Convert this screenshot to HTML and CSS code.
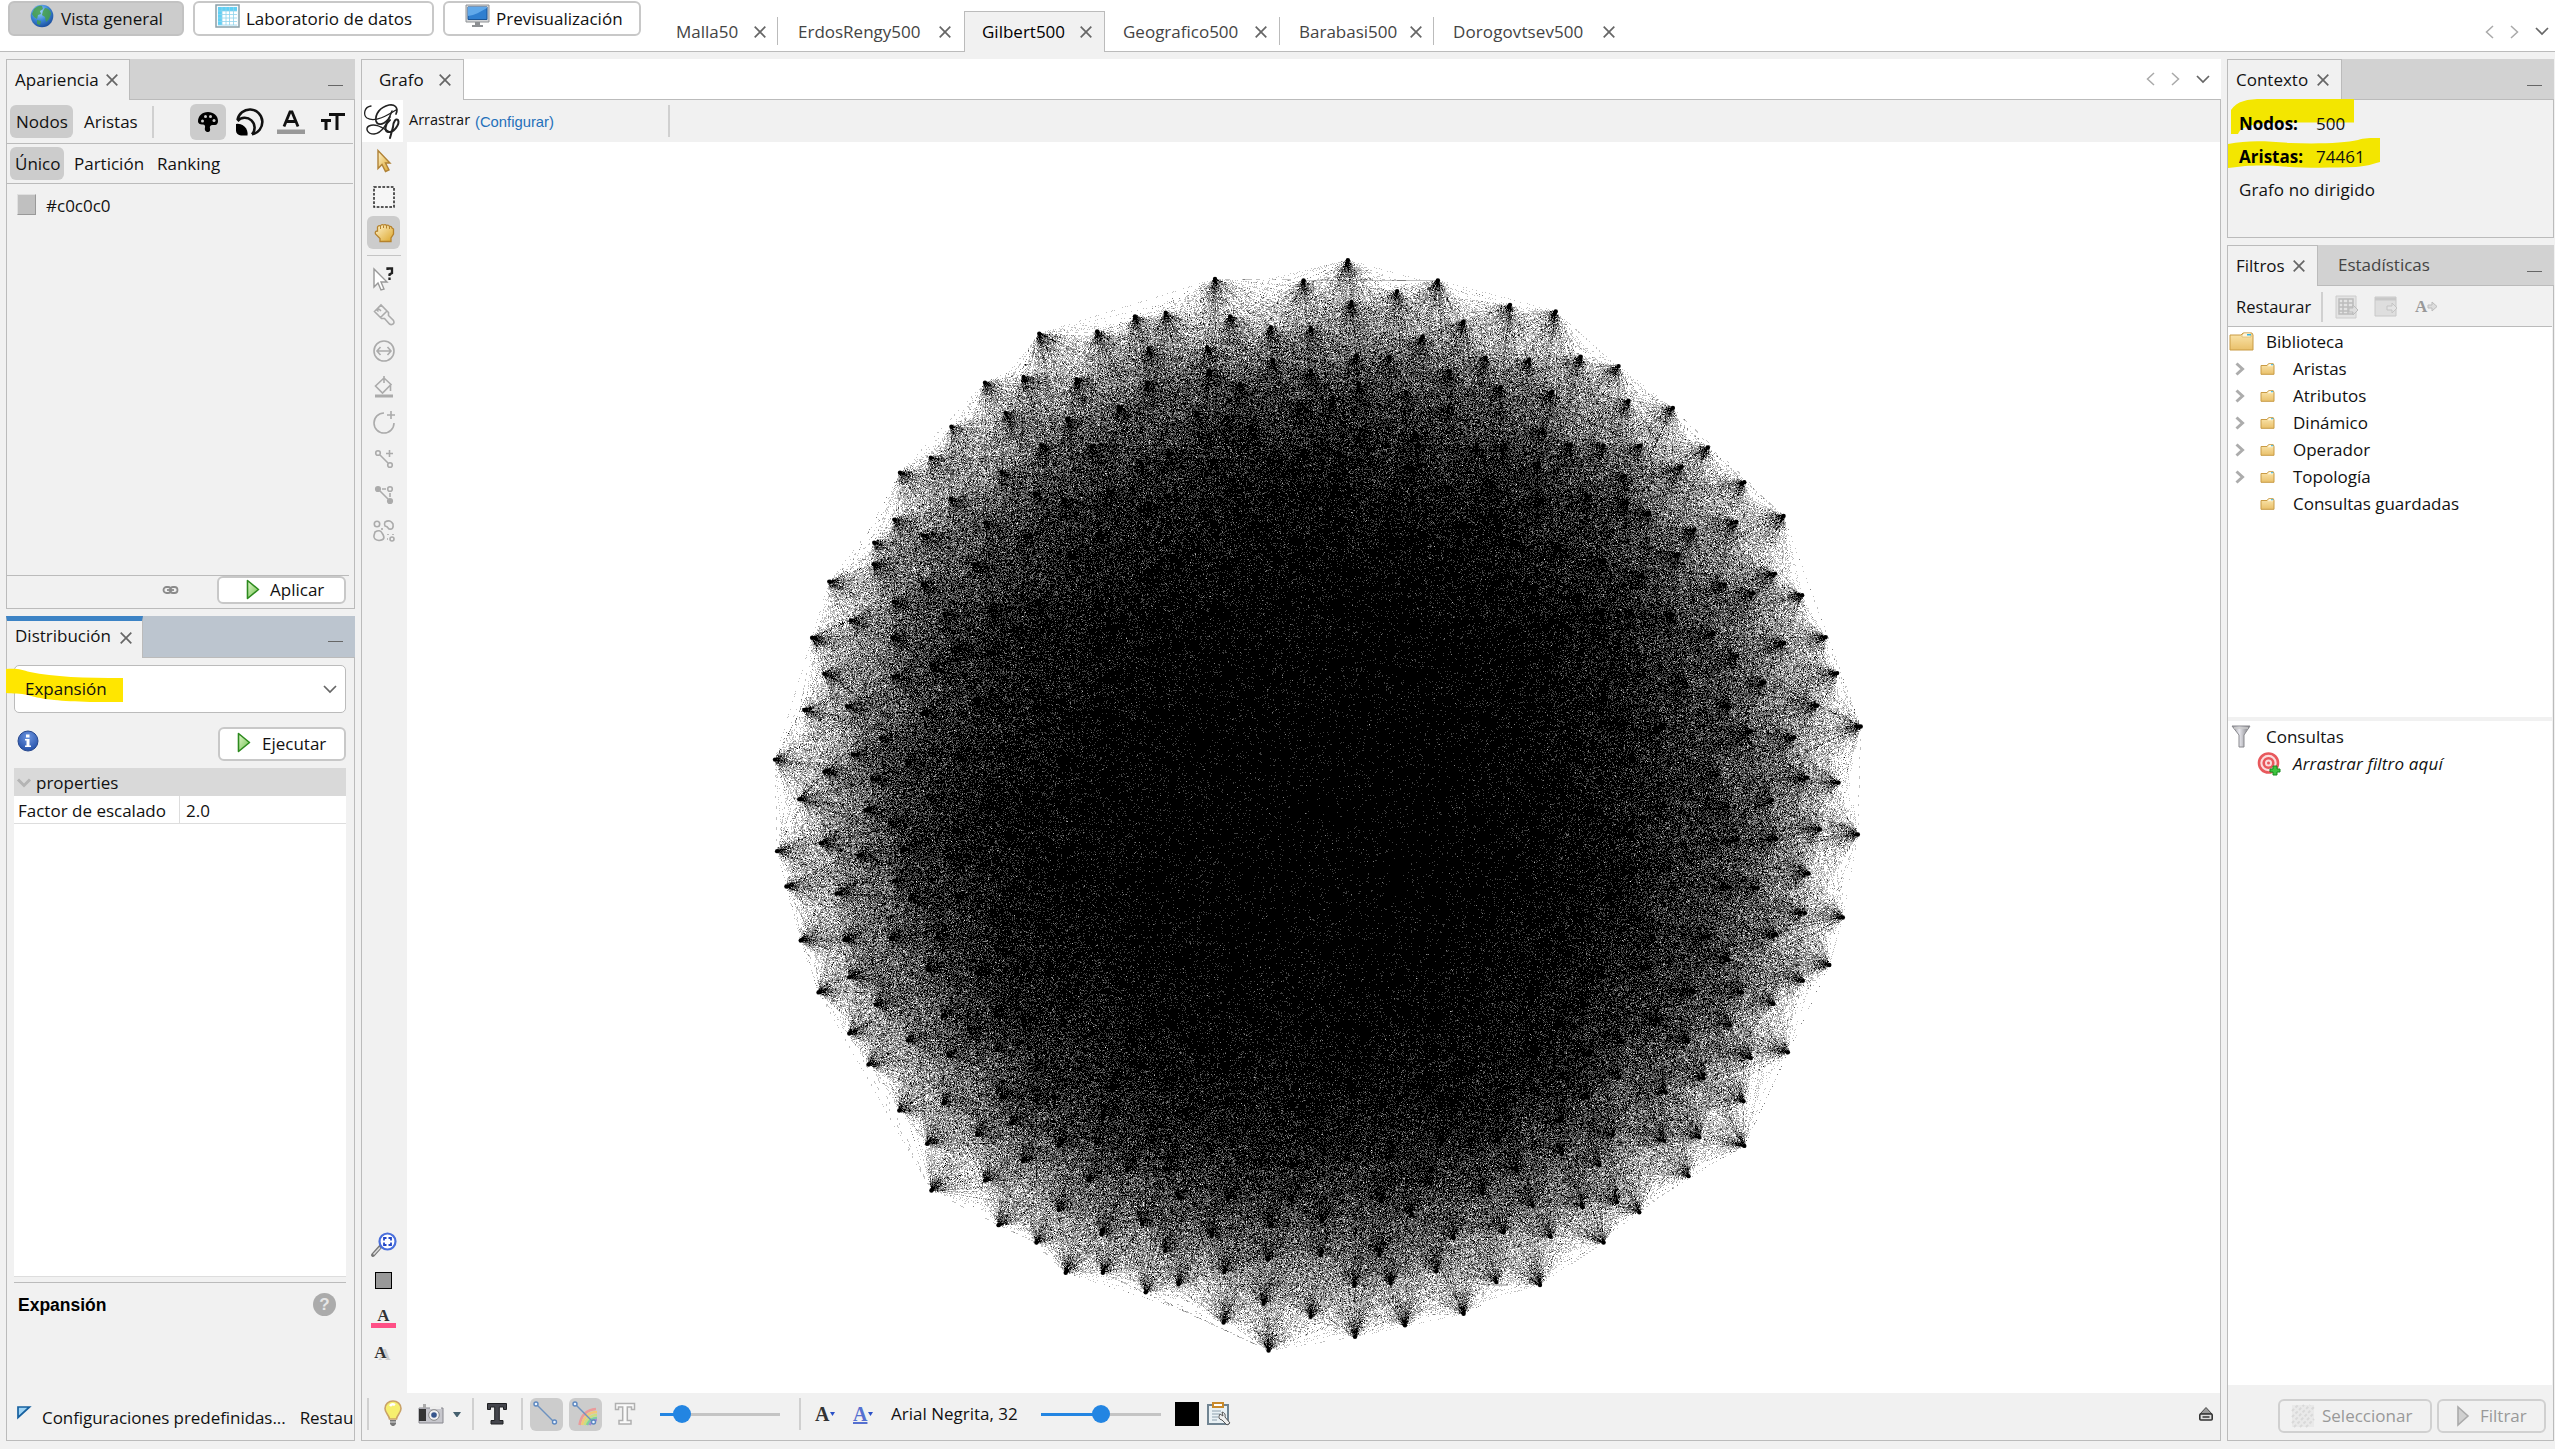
FILE: index.html
```html
<!DOCTYPE html>
<html lang="es">
<head>
<meta charset="utf-8">
<title>Gilbert500</title>
<link rel="stylesheet" href="styles.css">
</head>
<body>
<svg class="defs" width="0" height="0">
  <defs>
    <linearGradient id="gold" x1="0" y1="0" x2="1" y2="1"><stop offset="0" stop-color="#fff3cd"/><stop offset="1" stop-color="#dca62a"/></linearGradient>
    <linearGradient id="green" x1="0" y1="0" x2="1" y2="1"><stop offset="0" stop-color="#e4f8cf"/><stop offset="1" stop-color="#6cc04a"/></linearGradient>
    <linearGradient id="folder" x1="0" y1="0" x2="0" y2="1"><stop offset="0" stop-color="#fbe6ae"/><stop offset="1" stop-color="#e9c06a"/></linearGradient>
    <linearGradient id="steel" x1="0" y1="0" x2="1" y2="0"><stop offset="0" stop-color="#8b8b90"/><stop offset=".4" stop-color="#e8e8ee"/><stop offset="1" stop-color="#77777c"/></linearGradient>
    <radialGradient id="globe" cx=".4" cy=".3" r=".8"><stop offset="0" stop-color="#a5d8ff"/><stop offset=".5" stop-color="#3c86d6"/><stop offset="1" stop-color="#12408f"/></radialGradient>
    <radialGradient id="info" cx=".5" cy=".3" r=".7"><stop offset="0" stop-color="#6d95e0"/><stop offset="1" stop-color="#2450a8"/></radialGradient>
    <symbol id="x" viewBox="0 0 12 12"><path d="M.7.7l10.6 10.6M11.3.7L.7 11.3" stroke="#666" stroke-width="1.7" fill="none"/></symbol>
    <symbol id="left" viewBox="0 0 9 14"><path d="M8 1L1.5 7 8 13" stroke="#a9a9a9" stroke-width="1.5" fill="none"/></symbol>
    <symbol id="right" viewBox="0 0 9 14"><path d="M1 1l6.500 6L1 13" stroke="#a9a9a9" stroke-width="1.5" fill="none"/></symbol>
    <symbol id="down" viewBox="0 0 14 9"><path d="M1 1l6 6 6-6" stroke="#666" stroke-width="1.7" fill="none"/></symbol>
    <symbol id="tree" viewBox="0 0 10 14"><path d="M1.500 1.500L7.500 7l-6 5.500" stroke="#acacac" stroke-width="3" fill="none"/></symbol>
    <symbol id="play" viewBox="0 0 14 22"><path d="M1.500 1.500v18L12.500 10.500z" fill="url(#green)" stroke="#2d8a1e" stroke-width="1.6" stroke-linejoin="round"/></symbol>
    <symbol id="fold" viewBox="0 0 25 20"><path d="M1 3h11l2-2h9l1 2v15H1z" fill="url(#folder)" stroke="#c99b45"/><path d="M13 3l2-2h7v4h-9z" fill="#fff6dc" stroke="#d9b468" stroke-width=".7"/><path d="M18 2h4v1.500h-4z" fill="#31b3e0"/></symbol>
    <symbol id="sfold" viewBox="0 0 15 12"><path d="M1 2.500h6L8.500.7h4.800l.7 1.800v8.800H1z" fill="url(#folder)" stroke="#c99b45"/><path d="M8 2.700L9.300 1H13v2.200H8z" fill="#fff6dc"/><path d="M11 1.200h2.200v1H11z" fill="#31b3e0"/></symbol>
  </defs>
</svg>
<div class="app">
  <header class="top">
    <button class="mode on m1"><svg width="24" height="24" viewBox="0 0 24 24"><circle cx="12" cy="12" r="11.300" fill="url(#globe)"/><path d="M4 5c3-3 6-4 8-3l1 3-3 2 1 3-3 1-1 4-3-2-2-3zM15 4c3 0 6 3 6 6l-2 5-3 3-1-5-3-2 1-4zM7 16l4 1-1 4-3-1z" fill="#46a049" opacity=".85"/></svg><span>Vista general</span></button>
    <button class="mode m2"><svg width="25" height="24" viewBox="0 0 25 24"><path d="M1 1h23v22H1z" fill="#f4fbff" stroke="#8ba0a8" stroke-width="1.500"/><path d="M3 3h19v4H3zM3 7h4v14H3z" fill="#5fd0f5"/><path d="M7 7h15v14H7z" fill="#fff"/><path d="M3 7h19M3 10.500h19M3 14h19M3 17.500h19M3 21h19M7 3v18M11 3v18M14.500 3v18M18.500 3v18" stroke="#8fd3ec" stroke-width=".8"/></svg><span>Laboratorio de datos</span></button>
    <button class="mode m3"><svg width="25" height="24" viewBox="0 0 25 24"><path d="M1 1h23v17H1z" fill="#d4d6d8" stroke="#909396"/><path d="M3 3h19v12.500H3z" fill="#2f7fd0" stroke="#1b5596"/><path d="M3 12C10 11 15 8 22 4v-1H3z" fill="#61a9ea"/><path d="M10 18h5v3h3v2H7v-2h3z" fill="#8d9093"/></svg><span>Previsualización</span></button>
    <nav class="docs">
      <div class="doc d1"><span>Malla50</span><svg class="x"><use href="#x"/></svg></div>
      <div class="doc d2"><span>ErdosRengy500</span><svg class="x"><use href="#x"/></svg></div>
      <div class="doc d3 cur"><span>Gilbert500</span><svg class="x"><use href="#x"/></svg></div>
      <div class="doc d4"><span>Geografico500</span><svg class="x"><use href="#x"/></svg></div>
      <div class="doc d5"><span>Barabasi500</span><svg class="x"><use href="#x"/></svg></div>
      <div class="doc d6"><span>Dorogovtsev500</span><svg class="x"><use href="#x"/></svg></div>
    </nav>
    <div class="arrows"><svg width="9" height="14"><use href="#left"/></svg><svg width="9" height="14"><use href="#right"/></svg><svg width="14" height="9"><use href="#down"/></svg></div>
  </header>
  <main class="work">
    <div class="col">
      <section class="panel appearance">
        <div class="head"><div class="tab"><span>Apariencia</span><svg class="x"><use href="#x"/></svg></div><i class="min"></i></div>
        <div class="row elements">
          <span class="pill on">Nodos</span><span class="pill ar">Aristas</span><i class="sep"></i>
          <span class="tool"><svg width="22" height="22" viewBox="0 0 22 22"><path d="M11 1C5 1 1 5 1 10.500c0 2 2 3 4 3 2.500-.5 3.500 1 3 3-.5 2 0 4.500 3 4.500 2 0 2.500-2 2-3.500-.6-2 .6-3.500 2.500-3.500H18c2 0 3-2 3-4C21 4.500 16.500 1 11 1z"/><g fill="#ccc"><circle cx="5.500" cy="10" r="1.500"/><circle cx="8.500" cy="5.500" r="1.500"/><circle cx="13.500" cy="5.500" r="1.500"/><circle cx="17" cy="9.500" r="1.500"/></g></svg></span>
          <svg class="rings" width="28" height="28" viewBox="0 0 28 28"><g fill="none" stroke="#111" stroke-width="2.600"><path d="M1.500 12A12.500 12.500 0 1 1 16 26.300"/><path d="M1.500 13A8.500 8.500 0 1 1 16 26.300"/></g><path d="M0 16a10 10 0 0 1 11.500 11.500H5a5 5 0 0 1-5-5z"/></svg>
          <svg class="lab" width="28" height="24" viewBox="0 0 28 24"><path d="M7 15.500L13 1h2l6 14.500M9.500 10.500h9" fill="none" stroke="#111" stroke-width="2.800"/><path d="M0 18.500h28v4.500H0z" fill="#999"/></svg>
          <svg class="size" width="25" height="20" viewBox="0 0 25 20"><path d="M9 2.500h16M17 2v16M1 8.500h10M6 8v10" fill="none" stroke="#111" stroke-width="3"/></svg>
        </div>
        <div class="row modes"><span class="pill on">Único</span><span class="pill p2">Partición</span><span class="pill p3">Ranking</span></div>
        <div class="color"><i></i><span>#c0c0c0</span></div>
        <div class="apply"><svg width="17" height="11" viewBox="0 0 17 11"><g fill="none" stroke="#8b8b8b" stroke-width="1.800"><rect x="1.500" y="2" width="7.500" height="6" rx="3"/><rect x="8" y="2" width="7.500" height="6" rx="3"/><path d="M5 5h7"/></g></svg><button><svg width="14" height="22"><use href="#play"/></svg><span>Aplicar</span></button></div>
      </section>
      <section class="panel layout">
        <div class="head blue"><div class="tab"><span>Distribución</span><svg class="x"><use href="#x"/></svg></div><i class="min"></i></div>
        <div class="combo"><svg class="mark" width="118" height="34" viewBox="0 0 118 34"><path d="M0 1C12 0 16 2 24 4c24 5 54 6 93 6v24H84C55 33 38 32 22 27 14 25 7 26 0 25z" fill="#ffe600"/></svg><span>Expansión</span><svg width="14" height="9"><use href="#down"/></svg></div>
        <div class="run"><svg width="22" height="22" viewBox="0 0 22 22"><circle cx="11" cy="11" r="10" fill="url(#info)" stroke="#27488e"/><path d="M9 4.500h3.500v3H9zM8 9h4.500v6.500H14V17H8v-1.500h1.500v-5H8z" fill="#fff"/></svg><button><svg width="14" height="22"><use href="#play"/></svg><span>Ejecutar</span></button></div>
        <div class="props">
          <div class="group"><svg width="14" height="10" viewBox="0 0 14 10"><path d="M1 1.500l6 6 6-6" fill="none" stroke="#b4b4b4" stroke-width="3"/></svg><span>properties</span></div>
          <div class="prop"><span>Factor de escalado</span><span>2.0</span></div>
        </div>
        <div class="desc"><b>Expansión</b><span class="help">?</span></div>
        <div class="presets"><svg width="14" height="13" viewBox="0 0 14 13"><path d="M1 1h11.500L1 11.500z" fill="#9fd4f5" stroke="#16609f" stroke-width="1.700"/></svg><span>Configuraciones predefinidas...</span><span class="reset">Restau</span></div>
      </section>
    </div>
    <section class="panel graph">
      <div class="head"><div class="tab"><span>Grafo</span><svg class="x"><use href="#x"/></svg></div><div class="arrows"><svg width="9" height="14"><use href="#left"/></svg><svg width="9" height="14"><use href="#right"/></svg><svg width="14" height="9"><use href="#down"/></svg></div></div>
      <div class="gbar">
        <div class="logo"><svg width="39" height="38" viewBox="0 0 39 38"><g fill="none" stroke="#222" stroke-linecap="round"><path d="M8 3C1 4 0 12 4 15c8 5 21-3 29-8" stroke-width="1.300"/><path d="M33 11C36 4 31 1 26 2 17 4 12 11 13 18c2 6 9 3 14-4" stroke-width="1.700"/><path d="M29 8C24 20 20 30 11 31c-7 0-9-6-5-8 6-3 12 1 19 5" stroke-width="1.500"/><path d="M27 17c-5 4-6 11-2 12 6 1 12-8 10-12-2-2-5 2-5 7l-3 11" stroke-width="2"/></g></svg></div>
        <span class="drag">Arrastrar</span><a>(Configurar)</a><i class="sep"></i>
      </div>
      <div class="stage">
        <aside class="tools">
          <div class="ti"><svg width="24" height="24" viewBox="0 0 24 24"><path d="M6 1.500v18l4-4 3.500 7 3.500-1.500-3.500-7H18z" fill="url(#gold)" stroke="#b08236" stroke-width="1.400"/></svg></div>
          <div class="ti"><svg width="24" height="24" viewBox="0 0 24 24"><rect x="2" y="2" width="20" height="20" fill="#f6f6f6" stroke="#222" stroke-width="1.500" stroke-dasharray="2.700 1.500"/></svg></div>
          <div class="ti on"><svg width="24" height="24" viewBox="0 0 24 24"><path d="M8 20.500v-3L3.500 13q-1-3 2-3V6q1-2 3-1 1-2 3-1 2-1 3 .5 2-1 3 1 2-.5 2.500 1.500l1.500 1v5L19 17v3.500z" fill="url(#gold)" stroke="#b5822c" stroke-width="1.300"/><path d="M8.500 5v3M11.500 4.500V7M14.500 4.500v3M17.500 6v2" stroke="#b5822c"/></svg></div>
          <i class="rule"></i>
          <div class="ti"><svg width="24" height="24" viewBox="0 0 24 24"><path d="M2 2v18l4-4 3 7 3-1-3-7h6z" fill="#fff" stroke="#999" stroke-width="1.400"/><path d="M15.500 3V1.500h4.500V6l-2.500 1.500V9M17.500 10.500V13" fill="none" stroke="#222" stroke-width="2.300"/></svg></div>
          <div class="ti g"><svg width="24" height="24" viewBox="0 0 24 24"><path d="M2.500 8.500L9 2l7.500 7.500v3l5 5q1.500 3-1.500 4-2 .5-3-1l-4.500-5h-3zM6 5l3 3M8.500 14.500l7-7M4.500 6.500l2 2"/></svg></div>
          <div class="ti g"><svg width="24" height="24" viewBox="0 0 24 24"><circle cx="12" cy="12" r="10"/><path d="M5 12h14M8.500 8L5 12l3.500 4M15.500 8l3.500 4-3.500 4"/></svg></div>
          <div class="ti g"><svg width="24" height="24" viewBox="0 0 24 24"><path d="M12 1v7M12 3L3.500 11l7 7L19 9.500 12 3M18.500 9v7"/><path d="M3 21h18" stroke-width="3"/></svg></div>
          <div class="ti g"><svg width="24" height="24" viewBox="0 0 24 24"><path d="M12 2a10 10 0 1 0 10 10M19 0v8M15 4h8"/></svg></div>
          <div class="ti g"><svg width="24" height="24" viewBox="0 0 24 24"><circle cx="6" cy="6" r="2.300"/><circle cx="18" cy="18" r="2.300"/><path d="M8 8l8 8M17.500 3v7M14 6.500h7"/></svg></div>
          <div class="ti g"><svg width="24" height="24" viewBox="0 0 24 24"><circle cx="6" cy="6" r="2.300" fill="#aaa"/><circle cx="18" cy="18" r="2.300" fill="#aaa"/><circle cx="18" cy="6" r="2.300"/><path d="M8 8l8 8M10 6h4M18 10v4"/></svg></div>
          <div class="ti g"><svg width="24" height="24" viewBox="0 0 24 24"><circle cx="5" cy="5" r="2.700"/><path d="M13 3q5-3 8 2 1 6-4 5-2-3-4-3-1-2 0-4zM3 13q5-3 7 1 5 7-3 7.500-6-1-5-5z"/><circle cx="20" cy="20" r="2"/><path d="M10 9v2M16 15v1M15 20h1M21 15v1"/></svg></div>
          <div class="gap"></div>
          <div class="ti"><svg width="26" height="26" viewBox="0 0 26 26"><path d="M2 23L10 14" stroke="#777" stroke-width="4" stroke-linecap="round"/><path d="M2.500 22.500L9 15.500" stroke="#ddd" stroke-width="1.500"/><circle cx="16.500" cy="9.500" r="8" fill="#fff" stroke="#4a6fdc" stroke-width="2.200"/><path d="M13 8.500V6h2.500M17.500 6H20v2.500M20 10.500V13h-2.500M15.500 13H13v-2.500" stroke="#2448c8" stroke-width="1.800" fill="none"/></svg></div>
          <div class="ti"><i class="sq"></i></div>
          <div class="ti"><div class="pinkA">A</div></div>
          <div class="ti"><div class="shA">A</div></div>
        </aside>
        <canvas id="net" width="1813" height="1251"></canvas>
      </div>
      <footer class="bbar">
        <i class="sep"></i>
        <svg class="bulb" width="20" height="28" viewBox="0 0 20 28"><path d="M6.500 19C6 15 2 13 2 8.500a8 7.500 0 0 1 16 0C18 13 14 15 13.500 19z" fill="#f6ef6e" stroke="#c9a268" stroke-width="1.600"/><path d="M7 6q2-3 5-1" stroke="#fff" stroke-width="2.500" fill="none"/><path d="M7 20h6v4l-2 2H9l-2-2z" fill="#777"/><path d="M7 22h6" stroke="#ddd"/></svg>
        <svg class="cam" width="26" height="22" viewBox="0 0 26 22"><path d="M1 5h24v15H1z" fill="#c6c6cc" stroke="#88888f"/><path d="M1 6h7v12H1z" fill="#333"/><path d="M5 1h3v4H5z" fill="#aaa"/><path d="M12 3h11v3H12z" fill="#eee"/><circle cx="16" cy="12" r="5.300" fill="#f2f2f2" stroke="#888"/><circle cx="16" cy="12" r="2.800" fill="#37568c"/></svg>
        <svg class="tri" width="8" height="6"><path d="M0 1h8L4.500 6h-1z" fill="#45606e"/></svg>
        <i class="sep s2"></i>
        <svg class="bigt" width="22" height="24" viewBox="0 0 22 24"><path d="M1.500 1.500h19v6h-3V5h-4.200v13.500H17v3.500H5v-3.500h3.700V5H4.500v2.500h-3z" fill="#44454c" stroke="#1f2023"/></svg>
        <i class="sep s3"></i>
        <span class="sq33"><svg width="28" height="28" viewBox="0 0 28 28"><path d="M5 5l18 18" stroke="#6d91bf" stroke-width="1.500"/><g fill="#eaf3ff" stroke="#5d88c0" stroke-width="1.400"><circle cx="4" cy="4" r="2"/><circle cx="22.500" cy="22" r="2"/></g></svg></span>
        <span class="sq33"><svg width="28" height="28" viewBox="0 0 28 28"><g fill="none" stroke-width="2.600"><path d="M8.500 25Q11 10 25 9" stroke="#ea9a9a"/><path d="M11 25Q14 12 26 12" stroke="#f2c977"/><path d="M13.500 25Q17 15 26 15" stroke="#c9e07e"/><path d="M16 25Q19 18 26 18" stroke="#7fd0a0"/><path d="M18.500 25Q21 20 26 20" stroke="#a58bd8"/></g><path d="M5 5l18 18" stroke="#6d91bf" stroke-width="1.500"/><g fill="#eaf3ff" stroke="#5d88c0" stroke-width="1.400"><circle cx="4" cy="4" r="2"/><circle cx="22.500" cy="22" r="2"/></g></svg></span>
        <svg class="outt" width="22" height="24" viewBox="0 0 22 24"><path d="M1.500 1.500h19v6h-3V5h-4.200v13.500H17v3.500H5v-3.500h3.700V5H4.500v2.500h-3z" fill="#fafafa" stroke="#b0b0b0" stroke-width="1.500"/></svg>
        <div class="slider a"><i></i><b></b></div>
        <i class="sep s4"></i>
        <span class="fa">A<svg width="5" height="4"><path d="M0 0h5L2.500 4z" fill="#2a50c8"/></svg></span>
        <span class="fa bl">A<svg width="5" height="4"><path d="M0 0h5L2.500 4z" fill="#2a50c8"/></svg></span>
        <span class="fname">Arial Negrita, 32</span>
        <div class="slider b"><i></i><b></b></div>
        <i class="blk"></i>
        <svg class="clip" width="26" height="26" viewBox="0 0 26 26"><path d="M2 4h20v19H2z" fill="#e9f1f5" stroke="#708492" stroke-width="2"/><path d="M7 2h10v4H7z" fill="#fff" stroke="#c98a2b" stroke-width="2"/><path d="M6 10h9M6 13h8M6 16h6M6 19h5" stroke="#8da0ad"/><path d="M14 13q-3 5 2 6l5 5 3-2-5-6q1-4-3-5l1 4z" fill="#eee" stroke="#555"/></svg>
        <svg class="eject" width="16" height="16" viewBox="0 0 16 16"><path d="M8 1.500L14 8H2z" fill="#999" stroke="#444"/><rect x="1.800" y="8" width="12.400" height="6" rx="1" fill="#ddd" stroke="#333" stroke-width="1.600"/><path d="M4.500 11h7" stroke="#333" stroke-width="1.500"/></svg>
      </footer>
    </section>
    <div class="col">
      <section class="panel context">
        <div class="head"><div class="tab"><span>Contexto</span><svg class="x"><use href="#x"/></svg></div><i class="min"></i></div>
        <svg class="hl" width="156" height="72" viewBox="0 0 156 72"><path d="M3 11C9 2 19 0 35 0h91v23.500H77c-30 0-46 0-54 3-8 2-11 4-13 8.500H3z" fill="#f3e600"/><path d="M0 45c20-4 38-3 62-1 30 1 55 0 68-3 6-2 12-2 22-2v24c-8 2-12 4-24 5-28 1-60 1-78-1-18-1-30-1-50 2z" fill="#f3e600"/></svg>
        <dl><div><dt>Nodos:</dt><dd>500</dd></div><div><dt>Aristas:</dt><dd>74461</dd></div><div class="kind">Grafo no dirigido</div></dl>
      </section>
      <section class="panel filters">
        <div class="head"><div class="tab"><span>Filtros</span><svg class="x"><use href="#x"/></svg></div><span class="other">Estadísticas</span><i class="min"></i></div>
        <div class="fbar"><span>Restaurar</span><i class="sep"></i>
          <svg width="24" height="24" viewBox="0 0 24 24"><path d="M1 1h20v22H1z" fill="#e3e3e3" stroke="#ccc"/><path d="M4 4h14v15H4zM4 8h14M4 12h14M4 16h14M8 4v15M13 4v15" fill="none" stroke="#bcbcbc" stroke-width="1.500"/><path d="M14 13h4v-3l5 5-5 5v-3h-4z" fill="#ddd" stroke="#bbb"/></svg>
          <svg width="24" height="24" viewBox="0 0 24 24"><path d="M1 2h21v19H1z" fill="#dedede" stroke="#c8c8c8"/><path d="M1 4h21" stroke="#c8c8c8" stroke-width="3"/><path d="M13 11h5V8l5 5-5 5v-3h-5z" fill="#e4e4e4" stroke="#c4c4c4"/></svg>
          <span class="ga">A<svg width="11" height="11" viewBox="0 0 11 11"><path d="M1 4h4V1l5 4.500-5 4.500V7H1z" fill="#ddd" stroke="#bbb"/></svg></span></div>
        <ul class="tree">
          <li class="root"><svg width="25" height="20"><use href="#fold"/></svg><span>Biblioteca</span></li>
          <li><svg width="10" height="14"><use href="#tree"/></svg><svg class="f" width="15" height="12"><use href="#sfold"/></svg><span>Aristas</span></li>
          <li><svg width="10" height="14"><use href="#tree"/></svg><svg class="f" width="15" height="12"><use href="#sfold"/></svg><span>Atributos</span></li>
          <li><svg width="10" height="14"><use href="#tree"/></svg><svg class="f" width="15" height="12"><use href="#sfold"/></svg><span>Dinámico</span></li>
          <li><svg width="10" height="14"><use href="#tree"/></svg><svg class="f" width="15" height="12"><use href="#sfold"/></svg><span>Operador</span></li>
          <li><svg width="10" height="14"><use href="#tree"/></svg><svg class="f" width="15" height="12"><use href="#sfold"/></svg><span>Topología</span></li>
          <li><svg width="10" height="14"></svg><svg class="f" width="15" height="12"><use href="#sfold"/></svg><span>Consultas guardadas</span></li>
        </ul>
        <ul class="tree queries">
          <li class="root"><svg width="25" height="24" viewBox="0 0 25 24"><path d="M3 1h18l-6 9v12h-5V10z" fill="url(#steel)" stroke="#88888d"/><path d="M5 3h14" stroke="#ccc" stroke-width="1.500"/></svg><span>Consultas</span></li>
          <li class="drop"><svg width="25" height="24" viewBox="0 0 25 24"><g fill="#fbdcdc" stroke="#e8585c" stroke-width="2.600"><circle cx="11.500" cy="11" r="9.500"/><circle cx="11.500" cy="11" r="4.800"/></g><circle cx="11.500" cy="11" r="1.500" fill="#e8585c"/><path d="M16 14h4v3h3v3h-3v3h-4v-3h-3v-3h3z" fill="#3ec43e" stroke="#188a20"/></svg><em>Arrastrar filtro aquí</em></li>
        </ul>
        <div class="fbtns"><button class="sel"><svg width="22" height="22" viewBox="0 0 22 22"><path d="M0 0h22v22H0z" fill="#e9e9e9"/><path d="M0 6L6 0M0 12L12 0M0 18L18 0M2 22L22 2M8 22L22 8M14 22l8-8" stroke="#d9d9d9" stroke-width="2" stroke-dasharray="3 2"/></svg><span>Seleccionar</span></button><button class="fil"><svg width="14" height="22" viewBox="0 0 14 22"><path d="M2 2v18l10-9z" fill="#d0d0d0" stroke="#aaa" stroke-width="1.600"/></svg><span>Filtrar</span></button></div>
      </section>
    </div>
  </main>
</div>
<script src="graph.js"></script>
</body>
</html>
```
FILE: graph.js
```js
// Draws the Gilbert G(500, p) graph with very thin edges on a 4-sample pixel grid.
(function () {
  var canvas = document.getElementById('net');
  var W = canvas.width, H = canvas.height;
  var ctx = canvas.getContext('2d');

  // Outer nodes of the layout, in layout units (x, y pairs).
  var outer = [
    823,28, 637,54, 761,56, 949,56, 892,71, 828,86, 1050,90, 1114,99, 985,113, 568,101, 525,106, 658,106,
    715,121, 771,122, 391,130, 472,127, 928,134, 544,150, 626,149, 835,160, 881,162, 1016,163, 1077,166,
    1149,162, 1202,175, 718,166, 628,182, 771,181, 966,182, 315,198, 369,190, 443,193, 542,198, 672,199,
    838,200, 1037,204, 1109,210, 905,212, 802,219, 1216,223, 1278,233, 502,231, 344,240, 612,240, 268,259,
    430,248, 918,268, 1327,288, 1233,285, 1181,285, 1135,284, 1043,284, 1004,284, 464,286, 394,285, 239,302,
    572,297, 196,323, 338,322, 1290,315, 1378,336, 1090,310, 532,308, 267,359, 385,352, 487,348, 425,361,
    1162,356, 1213,364, 1433,383, 188,388, 1245,378, 1367,391, 316,392, 1308,402, 228,410, 160,420, 474,408,
    371,411, 433,436, 159,450, 1286,436, 1182,444, 1421,463, 97,474, 228,477, 300,450, 1351,478, 1235,466,
    1391,490, 1459,493, 187,502, 258,519, 127,528, 1278,520, 1334,546, 73,552, 185,552, 1492,551, 1434,559,
    1368,577, 90,602, 1508,601, 187,606, 1406,614, 240,590, 122,647, 62,652, 1480,646, 1355,647, 1541,675,
    228,657, 1387,682, 1448,690, 169,691, 21,721, 130,714, 90,738, 157,748, 1466,746, 1510,753, 1340,742,
    55,776, 1417,777, 148,791, 1484,818, 1537,825, 1423,831, 1369,832, 85,837, 24,848, 138,854, 199,846,
    1468,879, 37,897, 107,907, 188,889, 210,914, 1358,898, 1397,899, 1463,934, 1516,940, 57,972, 118,971,
    183,969, 247,968, 1423,964, 1328,967, 1497,1006, 1356,999, 125,1023, 235,1012, 303,1017, 1460,1028,
    82,1044, 1307,1044, 1375,1044, 1419,1060, 162,1061, 256,1077, 330,1077, 1358,1090, 125,1101, 207,1111,
    1299,1112, 1205,1112, 1258,1084, 1439,1127, 264,1132, 332,1124, 1387,1135, 152,1144, 388,1150,
    1321,1163, 1203,1162, 1130,1165, 1268,1183, 1377,1195, 257,1198, 338,1190, 1159,1190, 195,1208,
    352,1226, 304,1242, 234,1254, 1194,1242, 1315,1245, 1266,1250, 1378,1257, 1123,1268, 368,1278,
    418,1257, 514,1291, 1175,1284, 1060,1292, 460,1305, 315,1305, 240,1319, 1300,1299, 938,1309, 1012,1323,
    587,1329, 655,1331, 870,1334, 418,1346, 1082,1340, 1152,1342, 1200,1335, 1231,1349, 912,1353,
    334,1367, 535,1365, 714,1368, 787,1361, 387,1391, 478,1380, 632,1382, 971,1385, 1041,1377, 1107,1383,
    1181,1391, 567,1403, 711,1415, 785,1409, 867,1409, 428,1433, 480,1433, 650,1432, 947,1431, 586,1449,
    832,1451, 883,1448, 1031,1446, 1092,1450, 540,1460, 705,1476, 649,1502, 771,1494, 985,1490, 903,1506,
    833,1522, 712,1541
  ];

  var seed = 20231;
  function rnd() {
    seed = (Math.imul(seed, 1664525) + 1013904223) >>> 0;
    return seed / 4294967296;
  }

  var nodes = [];
  var i, j, k;
  for (i = 0; i < outer.length; i += 2) {
    nodes.push([outer[i] / 1.4 + 353, outer[i + 1] / 1.3876 + 98]);
  }
  var outerCount = nodes.length;
  // Inner nodes: best-candidate sampling keeps them evenly spread.
  var cx = 913, cy = 655;
  while (nodes.length < 500) {
    var best = null, bestD = -1;
    for (k = 0; k < 12; k++) {
      var a = rnd() * Math.PI * 2, r = Math.sqrt(rnd()) * 445;
      var px = cx + Math.cos(a) * r, py = cy + Math.sin(a) * r, d = 1e9;
      for (j = 0; j < nodes.length; j++) {
        var ex = nodes[j][0] - px, ey = nodes[j][1] - py;
        d = Math.min(d, ex * ex + ey * ey);
      }
      if (d > bestD) { bestD = d; best = [px, py]; }
    }
    nodes.push(best);
  }

  var mask = new Uint8Array(W * H);
  var OFF = [0.375, 0.875, 0.125, 0.625];
  var HW = 0.03;

  function edge(x0, y0, x1, y1) {
    var dx = x1 - x0, dy = y1 - y0, t, s, n, p, q, f, m;
    var steep = Math.abs(dy) > Math.abs(dx);
    if (steep) { t = x0; x0 = y0; y0 = t; t = x1; x1 = y1; y1 = t; }
    if (x0 > x1) { t = x0; x0 = x1; x1 = t; t = y0; y0 = y1; y1 = t; }
    m = (y1 - y0) / (x1 - x0);
    n = Math.floor(x1 * 4);
    for (s = Math.ceil(x0 * 4); s <= n; s++) {
      p = y0 + m * ((s + 0.5) / 4 - x0) - OFF[s & 3];
      q = Math.floor(p + 0.5);
      f = p - q;
      if (f < HW && f > -HW) {
        mask[steep ? (s >> 2) * W + q : q * W + (s >> 2)] |= 1 << (s & 3);
      }
    }
  }

  for (i = 0; i < nodes.length; i++) {
    for (j = i + 1; j < nodes.length; j++) {
      if (rnd() < 0.597) edge(nodes[i][0], nodes[i][1], nodes[j][0], nodes[j][1]);
    }
  }

  var img = ctx.createImageData(W, H);
  var px32 = new Uint32Array(img.data.buffer);
  var shade = [255, 191, 128, 64, 0];
  for (i = 0; i < mask.length; i++) {
    var b = mask[i];
    var v = shade[(b & 1) + (b >> 1 & 1) + (b >> 2 & 1) + (b >> 3 & 1)];
    px32[i] = (255 << 24 | v << 16 | v << 8 | v) >>> 0;
  }
  ctx.putImageData(img, 0, 0);
  for (i = 0; i < outerCount; i++) {
    ctx.beginPath();
    ctx.arc(nodes[i][0], nodes[i][1], 2.2, 0, 7);
    ctx.fill();
  }
})();
```
FILE: styles.css
```css
* { box-sizing: border-box; }
body { margin: 0; background: #f1f1f1; font: 17px/24px "Open Sans", "Noto Sans", sans-serif; color: #111; overflow: hidden; }
svg { display: block; flex: none; overflow: visible; }
.defs { position: absolute; }
span, dt, dd, em, b { white-space: nowrap; }
ul, dl, dd { margin: 0; padding: 0; list-style: none; }
button { font: inherit; color: inherit; background: #fff; border: 2px solid #c8c8c8; border-radius: 6px; padding: 0; display: flex; align-items: center; flex: none; }
.app { width: 2555px; height: 1449px; display: flex; flex-direction: column; }
.x { width: 12px; height: 12px; }
.sep { width: 2px; height: 32px; background: #d0d0d0; flex: none; }

.top { height: 52px; background: #fff; border-bottom: 1px solid #bbb; display: flex; align-items: flex-start; padding-left: 8px; }
.mode { height: 35px; margin-top: 1px; margin-right: 9px; gap: 7px; padding-left: 20px; }
.mode svg { margin-top: -5px; }
.mode.on { background: #ccc; border-color: #c2c2c2; }
.m1 { width: 176px; }
.m2 { width: 241px; gap: 6px; }
.m3 { width: 198px; gap: 6px; }
.docs { display: flex; height: 52px; align-items: flex-end; margin-left: 8px; color: #444; }
.doc { height: 41px; display: flex; align-items: center; justify-content: space-between; position: relative; padding: 0 12px 0 18px; }
.doc:not(.cur)::after { content: ""; position: absolute; right: 0; top: 6px; width: 1px; height: 28px; background: #bbb; }
.doc.d2::after, .doc.d6::after { display: none; }
.d1 { width: 120px; }
.d2 { width: 186px; padding-right: 13px; padding-left: 20px; }
.d3 { width: 141px; background: #f1f1f1; border: 1px solid #bbb; border-bottom: 0; color: #000; padding-left: 17px; }
.d4 { width: 175px; padding-right: 13px; padding-left: 18px; }
.d5 { width: 154px; padding-left: 19px; }
.d6 { width: 193px; padding-left: 19px; letter-spacing: .1px; }
.arrows { display: flex; align-items: center; margin-left: auto; gap: 16px; }
.top .arrows { height: 63px; margin-right: 6px; }

.work { flex: 1; display: grid; grid-template-columns: 349px 1860px 327px; column-gap: 6px; padding: 7px 0 8px 6px; min-height: 0; }
.col { display: flex; flex-direction: column; min-height: 0; gap: 7px; }
.panel { border: 1px solid #bbb; border-top: 0; display: flex; flex-direction: column; min-height: 0; min-width: 0; }
.head { height: 41px; flex: none; background: #d2d2d2; border-bottom: 1px solid #bbb; display: flex; align-items: center; margin: 0 -1px; }
.tab { height: 41px; align-self: flex-start; background: #f1f1f1; border: 1px solid #bbb; border-bottom: 0; display: flex; align-items: center; justify-content: space-between; padding: 0 10px 0 8px; }
.min { width: 15px; height: 1px; background: #666; margin: 12px 12px 0 auto; }

.appearance { height: 550px; flex: none; }
.appearance .tab { width: 124px; padding-right: 11px; }
.row { display: flex; align-items: center; border-bottom: 1px solid #bbb; margin-right: 1px; flex: none; }
.elements { height: 44px; }
.modes { height: 40px; }
.pill { height: 33px; line-height: 33px; border-radius: 6px; flex: none; padding-left: 6px; }
.on.pill, .tool { background: #ccc; }
.elements .on { margin-left: 3px; width: 63px; }
.ar { width: 75px; margin-left: 5px; }
.elements .sep { margin-left: -1px; }
.tool { width: 36px; height: 36px; border-radius: 6px; margin-left: 36px; display: flex; align-items: center; justify-content: center; flex: none; }
.rings { margin-left: 10px; }
.lab { margin: 2px 0 0 13px; }
.size { margin-left: 15px; }
.modes .on { margin-left: 3px; width: 54px; }
.modes .pill { padding-left: 5px; }
.p2 { margin-left: 5px; width: 83px; }
.color { display: flex; align-items: center; height: 43px; padding-left: 10px; }
.color i { width: 19px; height: 21px; background: #c0c0c0; border: 1px solid; border-color: #e0e0e0 #999 #999 #e0e0e0; margin: -3px 10px 0 0; }
.apply { margin: auto 5px 4px 0; border-top: 1px solid #bbb; height: 29px; display: flex; align-items: center; padding-left: 155px; }
.apply button { width: 129px; height: 28px; margin: 0 -2px 0 38px; padding-left: 27px; gap: 10px; }

.layout { flex: 1; }
.head.blue { background: #bcc5cf; height: 42px; }
.blue .tab { width: 137px; height: 42px; border-top: 5px solid #3c83c5; padding: 0 10px 7px 8px; }
.blue .tab .x { margin-top: 3px; }
.blue .min { margin-top: 10px; }
.combo { height: 48px; margin: 7px 8px 0 7px; border: 1px solid #bbb; border-radius: 5px; background: #fff; display: flex; align-items: center; justify-content: space-between; padding: 0 8px 0 10px; position: relative; }
.combo span { position: relative; }
.mark { position: absolute; left: -9px; top: 2px; }
.run { display: flex; align-items: flex-start; justify-content: space-between; margin: 14px 8px 0 10px; height: 41px; }
.run > svg { margin-top: 3px; }
.run button { width: 128px; height: 34px; padding-left: 17px; gap: 11px; }
.run button svg { margin-top: -3px; }
.props { margin: 0 8px 0 7px; height: 509px; background: #fff; border-bottom: 1px solid #ddd; }
.group { height: 28px; background: #d9d9d9; display: flex; align-items: center; padding: 1px 0 0 3px; gap: 5px; }
.prop { height: 28px; display: flex; border-bottom: 1px solid #ddd; line-height: 29px; }
.prop span:first-child { width: 166px; padding-left: 4px; border-right: 1px solid #ddd; margin-right: 6px; }
.desc { margin: 5px 8px 0 7px; border-top: 1px solid #bbb; padding: 10px 10px 0 4px; display: flex; justify-content: space-between; font: bold 17.500px/25px "Liberation Sans", Arial, sans-serif; color: #000; }
.help { width: 23px; height: 23px; border-radius: 50%; background: #ababab; color: #e6e6e6; font-size: 17px; line-height: 24px; text-align: center; }
.presets { display: flex; margin: auto 0 10px 9px; width: 337px; overflow: hidden; letter-spacing: -.06px; }
.presets svg { margin: 0 11px 0 1px; }
.reset { margin-left: 14px; }

.graph > .head { background: #fff; }
.graph .tab { width: 103px; padding: 0 12px 0 17px; }
.head .arrows { margin-right: 11px; }
.gbar { height: 42px; display: flex; align-items: center; flex: none; }
.logo { width: 41px; height: 42px; background: #fff; padding: 3px 1px; }
.drag { font-size: 14.500px; margin-left: 6px; width: 66px; margin-top: -2px; }
.gbar a { font: 14.800px "Liberation Sans", Arial, sans-serif; color: #2470ba; width: 193px; margin-top: 1px; }
.stage { display: flex; flex: 1; min-height: 0; background: #fff; }
.stage canvas { display: block; }
.tools { width: 45px; background: #f1f1f1; display: flex; flex-direction: column; align-items: center; padding: 2px 2px 21px 0; }
.ti { width: 33px; height: 33px; border-radius: 6px; margin-bottom: 3px; display: flex; align-items: center; justify-content: center; flex: none; }
.ti.on { background: #ccc; }
.ti.g svg { fill: none; stroke: #ababab; stroke-width: 1.600; }
.rule { width: 34px; height: 1px; background: #c4c4c4; margin: 3px 0 6px; }
.gap { flex: 1; }
.sq { width: 17px; height: 17px; background: #999; border: 1px solid #000; }
.pinkA, .shA, .fa, .ga { font: bold 17px/15px "Liberation Serif", serif; color: #333; }
.pinkA { border-bottom: 5px solid #ff4f86; width: 25px; text-align: center; margin-top: 3px; }
.shA { text-shadow: 4px 2px 0 #ccc; padding-right: 6px; }
.bbar { height: 47px; display: flex; align-items: center; padding: 0 6px 5px 5px; flex: none; }
.bulb { margin-left: 14px; }
.cam { margin-left: 15px; }
.tri { margin-left: 9px; }
.s2 { margin: 0 12px 0 11px; }
.s3 { margin: 0 7px 0 13px; }
.sq33 { width: 33px; height: 33px; background: #ccc; border-radius: 6px; padding: 2px; margin-right: 6px; }
.outt { margin: 0 24px 0 6px; }
.slider { width: 120px; height: 18px; position: relative; background: linear-gradient(#c4c4c4, #c4c4c4) 0 8px / 120px 3px no-repeat; flex: none; }
.slider i { position: absolute; left: 0; top: 8px; height: 3px; width: 22px; background: #2385e2; }
.slider b { position: absolute; left: 13px; top: 0; width: 18px; height: 18px; border-radius: 50%; background: #2385e2; }
.slider.b i { width: 60px; }
.slider.b b { left: 51px; }
.s4 { margin: 0 14px 0 19px; }
.fa { font-size: 20px; width: 38px; display: flex; align-items: center; gap: 1px; }
.bl { color: #5570d0; width: 38px; text-decoration: underline; }
.fname { width: 150px; }
.blk { width: 24px; height: 24px; background: #000; margin: 0 7px 0 14px; }
.eject { margin-left: auto; }

.context { height: 179px; flex: none; position: relative; }
.context .tab { width: 115px; padding-right: 12px; }
.hl { position: absolute; left: 0; top: 40px; }
dl { padding: 7px 0 0 11px; position: relative; }
dl div { height: 33px; line-height: 33px; display: flex; }
dl .kind { letter-spacing: .1px; }
dt { width: 77px; font-weight: bold; color: #000; }
.filters { flex: 1; }
.filters .tab { width: 91px; padding-right: 12px; }
.other { margin-left: 20px; color: #444; }
.fbar { height: 41px; border-bottom: 1px solid #bbb; margin-right: 1px; display: flex; align-items: center; padding: 1px 0 0 8px; flex: none; }
.fbar > span:first-child { width: 85px; font-size: 16.500px; }
.fbar > .sep { height: 30px; margin-right: 12px; }
.fbar > svg { margin-right: 15px; }
.ga { color: #999; display: flex; align-items: center; margin-left: 2px; }
.tree { background: #fff; height: 390px; margin-right: 1px; flex: none; padding-top: 2px; }
.tree li { height: 26.900px; display: flex; align-items: center; padding-left: 7px; }
.tree li.root { padding-left: 1px; gap: 12px; }
.tree .f { margin: 0 18px 0 15px; }
.queries { flex: 1; height: auto; margin-top: 4px; padding-top: 3px; }
.queries li.drop { padding-left: 29px; gap: 11px; }
.queries em { letter-spacing: .15px; }
.fbtns { height: 55px; display: flex; justify-content: flex-end; padding: 14px 7px 0 0; gap: 5px; color: #999; }
.fbtns button { background: #f1f1f1; height: 34px; border-color: #d0d0d0; }
.sel { width: 154px; }
.sel svg { margin: 0 8px 0 12px; }
.fil { width: 109px; }
.fil svg { margin: 0 10px 0 17px; }
```
